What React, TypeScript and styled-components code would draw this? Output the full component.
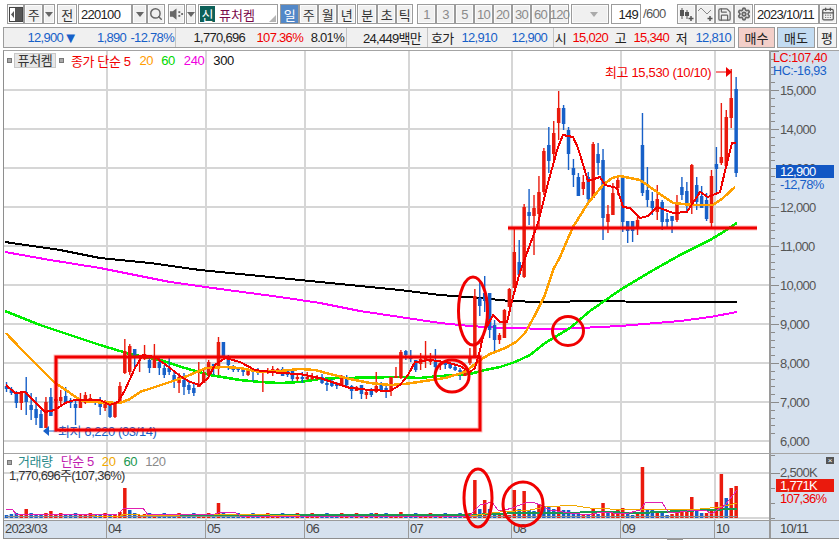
import React from "react";
import styled, { createGlobalStyle } from "styled-components";
import { Search, Save, Settings, CalendarDays } from "lucide-react";

const FONT = `"Liberation Sans", "Noto Sans CJK KR", sans-serif`;
const RED = "#ea1a0d";
const BLUE = "#1760c8";

const Global = createGlobalStyle`
  html, body { margin: 0; padding: 0; background: #fff; }
  body { font-family: ${FONT}; }
`;

const Page = styled.div`
  position: relative;
  width: 839px;
  height: 540px;
  overflow: hidden;
  background: #fff;
  font: 13px ${FONT};
  letter-spacing: -0.7px;
  color: #222;
`;

/* ---------- toolbar ---------- */
const Toolbar = styled.div`
  display: flex;
  height: 20px;
  padding: 4px 0 0 7px;
`;
const Btn = styled.div<{ $w: number; $gap?: number; $active?: boolean; $muted?: boolean }>`
  box-sizing: border-box;
  display: flex;
  align-items: center;
  justify-content: center;
  flex: none;
  width: ${(p) => p.$w}px;
  margin-left: ${(p) => p.$gap ?? 0}px;
  height: 20px;
  border: 1px solid #9c9c9c;
  background: ${(p) => (p.$active ? "#5288c8" : "#f0f0f0")};
  color: ${(p) => (p.$active ? "#fff" : p.$muted ? "#8a8a8a" : "#333")};
  box-shadow: inset 0 0 0 1px ${(p) => (p.$active ? "#5288c8" : "#fbfbfb")};
  white-space: nowrap;
`;
const ComboBtn = styled(Btn)`
  justify-content: flex-end;
  padding-right: 10px;
`;
const Field = styled.div<{ $w: number; $gap?: number; $align?: string }>`
  box-sizing: border-box;
  display: flex;
  align-items: center;
  justify-content: ${(p) => p.$align ?? "flex-start"};
  flex: none;
  width: ${(p) => p.$w}px;
  margin-left: ${(p) => p.$gap ?? 0}px;
  height: 20px;
  padding: 0 2px;
  border: 1px solid #9c9c9c;
  background: #fff;
  color: #222;
`;
const Caret = styled.i<{ $pale?: boolean }>`
  display: block;
  width: 0;
  height: 0;
  border-left: 4px solid transparent;
  border-right: 4px solid transparent;
  border-top: 5px solid ${(p) => (p.$pale ? "#aaa" : "#666")};
`;
const StockBox = styled.div`
  box-sizing: border-box;
  position: relative;
  display: flex;
  align-items: center;
  flex: none;
  width: 80px;
  height: 20px;
  margin-left: 2px;
  border: 1px solid #9c9c9c;
  background: #fff;
  padding-left: 1px;
  color: #7a0a4a;
  font-size: 13px;
  letter-spacing: 0;
`;
const Badge = styled.span`
  display: flex;
  align-items: center;
  justify-content: center;
  width: 15px;
  height: 16px;
  margin-right: 4px;
  background: #0c6058;
  color: #fff;
`;
const Corner = styled.i`
  position: absolute;
  right: 1px;
  bottom: 1px;
  width: 0;
  height: 0;
  border-left: 7px solid transparent;
  border-bottom: 7px solid #b5b5b5;
`;
const Total = styled.span`
  flex: none;
  width: 36px;
  padding-left: 2px;
  box-sizing: border-box;
  line-height: 20px;
  color: #555;
`;

/* ---------- quote row ---------- */
const QuoteRow = styled.div`
  display: flex;
  height: 21px;
  margin-top: 3px;
  padding-left: 3px;
`;
const QuoteStrip = styled.div`
  box-sizing: border-box;
  display: flex;
  align-items: center;
  flex: none;
  width: 732px;
  height: 21px;
  margin-right: 1px;
  border: 1px solid #9c9c9c;
  background: #f0f0f0;
`;
const Section = styled.div<{ $w: number }>`
  box-sizing: border-box;
  display: flex;
  align-items: center;
  flex: none;
  width: ${(p) => p.$w}px;
  height: 100%;
  border-right: 1px solid #c4c4c4;
`;
const Cell = styled.span<{ $w: number; $c?: string; $left?: boolean }>`
  flex: none;
  width: ${(p) => p.$w}px;
  box-sizing: border-box;
  padding-left: ${(p) => (p.$left ? 3 : 0)}px;
  text-align: ${(p) => (p.$left ? "left" : "right")};
  color: ${(p) => p.$c ?? "#222"};
  white-space: nowrap;
`;
const Arrow = styled(Cell)`
  font-size: 15px;
  line-height: 15px;
  letter-spacing: 0;
`;
const TradeBtn = styled.div<{ $w: number; $bg: string }>`
  box-sizing: border-box;
  display: flex;
  align-items: center;
  justify-content: center;
  flex: none;
  width: ${(p) => p.$w}px;
  margin-left: 2px;
  height: 21px;
  border: 1px solid #9c9c9c;
  background: ${(p) => p.$bg};
  letter-spacing: 0;
  color: #222;
`;

/* ---------- chart ---------- */
const ChartFrame = styled.div`
  position: relative;
  box-sizing: border-box;
  width: 839px;
  height: 490px;
  margin-top: 2px;
  padding-left: 3px;
`;
const FrameInner = styled.div`
  box-sizing: border-box;
  height: 489px;
  border-top: 1px solid #a4a4a4;
  border-left: 1px solid #8e8e8e;
  border-bottom: 1px solid #8e8e8e;
  display: grid;
  grid-template-columns: 767px 68px;
  grid-template-rows: 402px 67px 18px;
`;
const PlotBox = styled.div`
  position: relative;
  background: #fff;
  border-right: 2px solid #9a9a9a;
  height: 402px;
  box-sizing: border-box;
`;
const VolumeBox = styled(PlotBox)`
  height: 67px;
  border-top: 1px solid #a4a4a4;
`;
const ChartSvg = styled.svg`
  display: block;
  overflow: hidden;
`;
const AxisBox = styled.div`
  position: relative;
  background: #d6e1ee;
  overflow: hidden;
`;
const AxisVolume = styled(AxisBox)`
  border-top: 1px solid #a4a4a4;
  box-sizing: border-box;
`;
const HeaderReadout = styled.div`
  position: absolute;
  left: 2px;
  top: 1px;
  font-size: 12.5px;
  line-height: 13px;
  letter-spacing: -0.4px;
`;
const ReadLine = styled.div<{ $c: string }>`
  color: ${(p) => p.$c};
`;
const PriceFlag = styled.div<{ $bg: string; $top: number }>`
  position: absolute;
  left: 5px;
  top: ${(p) => p.$top}px;
  width: 58px;
  height: 13px;
  line-height: 13px;
  padding-left: 4px;
  box-sizing: border-box;
  background: ${(p) => p.$bg};
  color: #fff;
`;
const FlagNote = styled.div<{ $c: string; $top: number }>`
  position: absolute;
  left: 9px;
  top: ${(p) => p.$top}px;
  line-height: 11px;
  color: ${(p) => p.$c};
`;
const Legend = styled.div`
  position: absolute;
  left: 3px;
  top: 2px;
  display: flex;
  align-items: center;
  height: 15px;
  white-space: nowrap;
`;
const Dot = styled.i<{ $gap?: number }>`
  display: block;
  flex: none;
  width: 5px;
  height: 5px;
  margin-left: ${(p) => p.$gap ?? 0}px;
  background: #a8a8a8;
  border: 1px solid #777;
  box-sizing: border-box;
`;
const Tag = styled.span`
  flex: none;
  box-sizing: border-box;
  width: 42px;
  height: 15px;
  margin-left: 2px;
  line-height: 14px;
  text-align: center;
  background: #e6e6e6;
  border: 1px solid #c8c8c8;
  color: #333;
  letter-spacing: -0.3px;
`;
const LegendItem = styled.span<{ $c: string; $gap: number }>`
  margin-left: ${(p) => p.$gap}px;
  color: ${(p) => p.$c};
  letter-spacing: -0.4px;
`;
const VolLegend = styled(Legend)`
  top: 1px;
  height: 14px;
  line-height: 14px;
`;
const VolInfo = styled.div`
  position: absolute;
  left: 5px;
  top: 16px;
  line-height: 12px;
  letter-spacing: -0.75px;
  color: #333;
`;
const CloseBtn = styled.div`
  position: absolute;
  right: 5px;
  top: 3px;
  width: 8px;
  height: 7px;
  background: #555;
  color: #fff;
  font-size: 8px;
  line-height: 7px;
  text-align: center;
  letter-spacing: 0;
`;
const TimeAxis = styled.div`
  display: flex;
  background: #d6e1ee;
  border-top: 1px solid #9a9a9a;
  box-sizing: border-box;
  border-right: 2px solid #9a9a9a;
`;
const TimeCell = styled.div<{ $w: number }>`
  box-sizing: border-box;
  flex: none;
  width: ${(p) => p.$w}px;
  padding-left: 1px;
  line-height: 16px;
  color: #444;
  border-right: 1px solid #9a9a9a;
  &:last-child { border-right: 0; }
`;
const TimeEnd = styled.div`
  background: #d6e1ee;
  border-top: 1px solid #9a9a9a;
  box-sizing: border-box;
  padding-left: 9px;
  line-height: 16px;
  color: #444;
`;
const Overlay = styled.svg`
  position: absolute;
  left: 0;
  top: 0;
  pointer-events: none;
`;
const Thumb = styled.i`
  position: absolute;
  left: 667px;
  bottom: 0;
  width: 16px;
  height: 2px;
  background: #9a9a9a;
`;
const SvgText = styled.text<{ $ls?: number }>`
  font-family: ${FONT};
  font-size: 13px;
  letter-spacing: ${(p) => p.$ls ?? -0.7}px;
`;

/* ---------- data ---------- */
type C = [number, number, number, number, number];
// high, body top, body bottom, low, 1 = up (red) / 0 = down (blue); pixel rows of the picture
const candles: C[] = [
  [382,386,389,392,0],[387,389,393,395,0],[391,392,403,408,0],[391,392,403,410,1],[377,392,402,415,0],
  [393,405,410,420,0],[397,409,418,425,0],[410,414,428,428,0],[397,402,428,428,1],[388,397,416,416,0],
  [398,399,401,402,1],[390,397,401,405,1],[387,396,402,404,0],[398,400,403,408,0],[400,404,408,425,0],
  [393,400,408,408,1],[392,395,403,404,1],[394,398,401,403,1],[400,401,403,405,0],[397,402,407,415,0],
  [400,403,408,411,1],[404,405,417,418,0],[403,404,417,418,1],[382,386,403,404,1],[339,351,373,374,1],
  [344,346,372,375,1],[349,349,355,367,0],[355,355,358,372,1],[345,354,359,360,1],[357,360,368,373,0],
  [344,359,368,368,1],[358,362,368,375,0],[365,368,375,378,0],[358,368,372,375,0],[372,375,380,388,0],
  [373,377,383,393,1],[373,380,387,395,0],[380,385,390,394,0],[384,388,393,396,0],[362,385,386,387,1],
  [370,373,383,383,1],[360,362,375,378,1],[364,364,366,375,0],[337,342,367,375,1],[342,342,358,358,0],
  [355,359,365,370,0],[365,367,370,372,0],[367,368,370,372,0],[367,368,372,376,0],[368,371,375,376,1],
  [368,370,372,381,0],[368,370,372,375,0],[370,370,372,392,1],[368,370,372,374,1],[366,369,372,376,1],
  [368,369,371,372,1],[367,369,376,376,0],[371,371,375,377,0],[371,371,379,381,0],[375,377,378,381,1],
  [372,377,378,383,0],[372,377,378,380,1],[373,377,378,380,1],[375,377,379,380,1],[374,377,383,384,0],
  [378,383,385,391,0],[379,383,386,387,0],[382,384,386,389,0],[375,377,385,385,1],[375,377,385,388,0],
  [385,386,391,399,0],[386,387,391,391,1],[385,385,394,399,0],[391,392,395,399,1],[388,389,395,397,0],
  [372,386,392,393,1],[382,383,390,392,0],[385,388,392,398,0],[377,377,390,396,1],[367,376,378,378,1],
  [350,352,378,379,1],[350,351,355,360,0],[350,356,359,362,0],[360,360,370,372,0],[353,359,364,370,1],
  [341,358,360,368,1],[353,359,362,365,1],[349,360,367,373,0],[361,363,365,370,1],[362,363,365,369,0],
  [363,364,368,369,0],[366,367,370,371,0],[368,370,371,380,0],[369,370,376,376,1],[348,357,363,365,1],
  [289,296,358,358,1],[280,298,306,316,0],[276,293,301,312,0],[293,293,330,338,0],[320,325,340,351,0],
  [333,335,340,344,1],[309,310,338,338,1],[288,289,307,307,1],[228,252,288,288,1],[240,262,275,276,0],
  [204,207,277,278,1],[189,212,216,225,0],[195,208,216,255,1],[176,192,214,228,1],[148,151,192,195,1],
  [127,145,161,173,0],[121,133,154,162,1],[91,108,123,140,1],[105,108,124,130,0],[127,130,154,170,0],
  [159,168,175,187,0],[173,177,196,196,0],[175,182,189,195,1],[172,177,199,202,0],[142,144,198,198,1],
  [143,154,163,175,0],[149,160,218,240,0],[205,214,222,233,1],[183,193,215,215,1],[175,180,188,195,1],
  [177,177,222,232,0],[221,221,231,243,0],[221,221,231,242,0],[217,220,228,235,1],[113,145,193,196,0],
  [167,190,200,207,0],[192,201,208,215,0],[185,199,212,220,1],[200,202,222,230,0],[213,219,222,227,0],
  [216,216,221,233,0],[195,203,220,222,1],[177,187,195,200,0],[182,191,203,212,0],[164,165,203,214,1],
  [177,185,202,210,0],[186,196,208,208,0],[193,200,219,221,0],[170,176,223,228,1],[147,164,169,195,0],
  [103,157,163,165,1],[110,117,166,167,1],[69,98,118,128,1],[77,89,173,177,0],
];
const cx = (i: number) => 6.5 + 4.93 * i;

const volOverride: Record<number, [number, number]> = {
  4: [9, 1], 9: [7, 1], 23: [6, 1], 24: [30, 1], 25: [8, 0], 43: [15, 1], 69: [2, 1],
  75: [5, 1], 81: [3, 0], 80: [6, 1], 85: [3, 1], 90: [3, 0], 94: [5, 1], 95: [38, 1], 96: [9, 0],
  97: [18, 1], 98: [9, 0], 99: [3, 0], 100: [4, 1], 103: [28, 1], 104: [9, 0], 105: [27, 1], 106: [8, 0],
  107: [7, 0], 108: [14, 1], 109: [12, 0], 110: [11, 0], 111: [9, 0], 112: [11, 1], 113: [8, 0],
  114: [8, 0], 115: [5, 0], 116: [4, 0], 117: [4, 1], 118: [4, 0], 119: [9, 1], 120: [4, 0], 121: [15, 1],
  122: [6, 0], 123: [5, 1], 124: [8, 1], 125: [10, 1], 126: [6, 0], 127: [3, 0], 128: [4, 1], 129: [51, 1],
  130: [9, 0], 131: [9, 0], 132: [6, 1], 133: [6, 0], 134: [3, 0], 135: [4, 1], 136: [7, 1], 137: [8, 1],
  138: [8, 1], 139: [21, 1], 140: [8, 0], 141: [5, 0], 142: [5, 1], 143: [9, 1],
  144: [16, 1], 145: [44, 1], 146: [20, 0], 147: [30, 1], 148: [32, 1],
};
const pts = (a: number[][]) => a.map((p) => p.join(",")).join(" ");

const black = [[5,242],[60,250],[100,258],[150,263],[200,270],[250,275],[300,280],[350,285],[400,290],[440,295],[480,298],[510,301],[540,302],[600,301],[650,302],[700,302],[737,302]];
const magenta = [[5,252],[50,260],[100,268],[170,282],[220,289],[280,297],[320,303],[360,311],[400,317],[440,323],[470,326],[500,328],[560,329],[620,326],[680,321],[710,317],[737,312]];
const green = [[5,311],[40,325],[70,335],[100,345],[130,354],[160,360],[185,368],[210,375],[240,380],[260,382],[280,383],[300,382],[320,379],[340,378],[400,377],[420,378],[440,376],[470,374],[485,370],[500,367],[515,362],[530,355],[545,343],[570,328],[590,311],[620,290],[650,272],[680,255],[710,240],[725,231],[737,223]];
const orange = [[6,333],[20,348],[40,368],[55,383],[70,393],[80,400],[90,402],[120,403],[130,399],[140,392],[155,387],[170,382],[185,377],[206,368],[225,367],[240,368],[260,372],[280,371],[300,369],[315,370],[330,374],[350,379],[370,383],[390,385],[405,384],[425,381],[445,378],[465,372],[480,360],[490,354],[505,348],[516,342],[525,333],[535,315],[545,295],[553,270],[560,257],[573,227],[588,203],[603,185],[612,178],[620,176],[640,180],[657,192],[673,203],[693,205],[713,205],[723,198],[735,187]];
const ma5 = [[6,385],[15,393],[25,392],[35,402],[45,412],[55,410],[65,403],[75,400],[100,400],[110,405],[118,402],[125,390],[135,368],[143,355],[155,357],[170,368],[180,376],[190,382],[200,385],[208,378],[215,365],[225,358],[240,362],[255,370],[280,373],[300,374],[320,378],[335,383],[350,388],[370,390],[390,391],[400,385],[408,375],[415,362],[430,360],[445,362],[460,366],[470,372],[475,368],[480,350],[484,332],[493,315],[500,322],[507,322],[513,297],[520,272],[528,250],[538,223],[548,183],[558,147],[563,135],[573,137],[578,148],[588,181],[600,177],[605,185],[617,188],[623,207],[630,208],[640,218],[648,216],[657,207],[673,213],[687,212],[700,192],[708,197],[720,192],[727,163],[732,143],[736,143]];

const volMagenta = [[6,509],[12,509],[17,515],[50,514],[70,515],[118,514],[123,509],[127,508],[143,508],[148,515],[215,514],[222,512],[235,512],[240,516],[470,516],[473,512],[480,505],[492,502],[498,510],[505,510],[512,508],[520,505],[528,502],[535,503],[540,505],[550,510],[570,513],[590,515],[600,512],[625,514],[640,510],[645,503],[662,502],[668,512],[680,512],[695,510],[705,510],[712,514],[717,510],[725,505],[737,490]];
const volOrange = [[23,515],[45,514],[90,514],[95,516],[120,516],[125,514],[140,515],[180,515],[200,514],[240,514],[300,516],[470,516],[500,512],[530,510],[545,507],[560,506],[570,505],[590,508],[610,509],[640,510],[670,509],[700,509],[720,507],[737,503]];
const volGreen = [[150,515],[470,515],[520,513],[560,513],[600,512],[640,513],[680,511],[737,509]];
const volGray = [[6,516],[737,516]];

const vGrid = [107, 206, 305, 409, 512, 621, 715];
const hGrid = [90, 129, 168, 207, 246, 285, 324, 363, 402, 441];
const prices = ["15,000", "14,000", "13,000", "12,000", "11,000", "10,000", "9,000", "8,000", "7,000", "6,000"];

const SpeakerIcon = () => (
  <svg width="16" height="14" viewBox="0 0 16 14">
    <path d="M1 4h3l4-3v12l-4-3H1z" fill="#666" />
    <rect x="10" y="4" width="2" height="2" fill="#666" />
    <rect x="10" y="8" width="2" height="2" fill="#666" />
    <rect x="13" y="6" width="2" height="2" fill="#666" />
  </svg>
);
const PanelIcon = () => (
  <svg width="14" height="15" viewBox="0 0 14 15">
    <rect x="0.5" y="0.5" width="13" height="14" fill="#fff" stroke="#444" />
    <rect x="6" y="1" width="7" height="13" fill="#555" />
    <path d="M5 4 2 7.5 5 11z" fill="#555" />
  </svg>
);
const CandleAddIcon = () => (
  <svg width="16" height="15" viewBox="0 0 16 15">
    <path d="M3 1v11M8 3v9" stroke="#555" />
    <rect x="1" y="3" width="4" height="6" fill="#555" />
    <rect x="6" y="5" width="4" height="4" fill="#555" />
    <path d="M12 9v5M9.5 11.5h5" stroke="#555" strokeWidth="1.5" />
  </svg>
);
const LineAddIcon = () => (
  <svg width="16" height="15" viewBox="0 0 16 15">
    <path d="M0 4 3 1l3 3 3 3 4-4" stroke="#888" fill="none" />
    <path d="M12 9v5M9.5 11.5h5" stroke="#555" strokeWidth="1.5" />
  </svg>
);

const priceSvg = (
  <ChartSvg width="765" height="402" viewBox="4 51 765 402">
    <g shapeRendering="crispEdges">
      {hGrid.map((y) => <line key={y} x1="4" x2="771" y1={y} y2={y} stroke="#d6d6d6" strokeWidth="1.5" />)}
      {vGrid.map((x) => <line key={x} x1={x} x2={x} y1="51" y2="453" stroke="#d6d6d6" strokeWidth="1.5" />)}
      <polyline points={pts(black)} fill="none" stroke="#000" strokeWidth="2" />
      <polyline points={pts(magenta)} fill="none" stroke="#ff00ff" strokeWidth="2" />
      <polyline points={pts(green)} fill="none" stroke="#00ee00" strokeWidth="2.5" />
    </g>
    {candles.map((c, i) => {
      const col = c[4] ? RED : BLUE;
      const x = cx(i);
      return (
        <g key={i} fill={col}>
          <rect x={x - 0.7} y={c[0]} width="1.4" height={c[3] - c[0]} />
          <rect x={x - 1.75} y={c[1]} width="3.5" height={Math.max(2, c[2] - c[1])} />
        </g>
      );
    })}
    <g shapeRendering="crispEdges">
      <polyline points={pts(orange)} fill="none" stroke="#ffa000" strokeWidth="2.5" />
      <polyline points={pts(ma5)} fill="none" stroke="#f00000" strokeWidth="2" />
    </g>
    <SvgText x="605" y="77" fill="#f00000" $ls={-0.35}>최고 15,530 (10/10)</SvgText>
    <path d="M716 72h11" stroke="#f00000" />
    <path d="M726 67l6 5-6 5z" fill="#f00000" />
    <SvgText x="58" y="436" fill={BLUE} $ls={-0.4}>최저 6,220 (03/14)</SvgText>
    <path d="M47 431h10" stroke={BLUE} />
    <path d="M49 426l-6 5 6 5z" fill={BLUE} />
  </ChartSvg>
);

const volumeSvg = (
  <ChartSvg width="765" height="66" viewBox="4 454 765 66">
    <g shapeRendering="crispEdges">
      <line x1="4" x2="771" y1="473" y2="473" stroke="#d6d6d6" strokeWidth="1.5" />
      <line x1="4" x2="771" y1="518" y2="518" stroke="#d6d6d6" strokeWidth="1.5" />
      {vGrid.map((x) => <line key={x} x1={x} x2={x} y1="454" y2="520" stroke="#d6d6d6" strokeWidth="1.5" />)}
    </g>
    {candles.map((c, i) => {
      const o = volOverride[i];
      const h = o ? o[0] : 3 + ((i * 7) % 3);
      const up = o ? o[1] : c[4];
      return <rect key={i} x={cx(i) - 1.75} y={518 - h} width="3.5" height={h} fill={up ? RED : BLUE} />;
    })}
    <g shapeRendering="crispEdges">
      <polyline points={pts(volGray)} fill="none" stroke="#8c8c8c" />
      <polyline points={pts(volGreen)} fill="none" stroke="#1a9850" strokeWidth="2" />
      <polyline points={pts(volOrange)} fill="none" stroke="#f0a800" />
      <polyline points={pts(volMagenta)} fill="none" stroke="#e020b0" />
    </g>
  </ChartSvg>
);

const priceAxis = (
  <ChartSvg width="68" height="402" viewBox="771 51 68 402">
    <g shapeRendering="crispEdges" stroke="#8a8a8a">
      {Array.from({ length: 50 }, (_, i) => {
        const y = Math.round(90 + (i - 5) * 7.8);
        const major = i % 5 === 0;
        return <line key={i} x1="771" x2={major ? 779 : 775} y1={y} y2={y} />;
      })}
    </g>
    {prices.map((p, i) => (
      <SvgText key={p} x="780" y={hGrid[i] + 5} fill="#555">{p}</SvgText>
    ))}
  </ChartSvg>
);

const volumeAxis = (
  <ChartSvg width="68" height="66" viewBox="771 454 68 66">
    <g shapeRendering="crispEdges" stroke="#8a8a8a">
      {[455, 473, 488, 503, 518].map((y, i) => <line key={y} x1="771" x2={i === 1 ? 780 : 775} y1={y} y2={y} />)}
    </g>
    <SvgText x="780" y="477" fill="#555">2,500K</SvgText>
  </ChartSvg>
);

const times: [string, number][] = [["2023/03", 103], ["04", 99], ["05", 99], ["06", 104], ["07", 103], ["08", 109], ["09", 94], ["10", 56]];
const periods = ["1", "3", "5", "10", "20", "30", "60", "120"];

export default function App() {
  return (
    <Page>
      <Global />
      <Toolbar>
        <Btn $w={17}><PanelIcon /></Btn>
        <Btn $w={19}>주</Btn>
        <Btn $w={12}><Caret /></Btn>
        <Btn $w={20} $gap={2}>전</Btn>
        <Field $w={54} $gap={1}>220100</Field>
        <Btn $w={15}><Caret /></Btn>
        <Btn $w={18}><Search size={14} color="#666" strokeWidth={2.5} /></Btn>
        <Btn $w={17} $gap={3}><SpeakerIcon /></Btn>
        <Btn $w={10} $gap={1}><Caret /></Btn>
        <StockBox><Badge>신</Badge>퓨처켐<Corner /></StockBox>
        <Btn $w={19} $gap={2} $active>일</Btn>
        <Btn $w={19}>주</Btn>
        <Btn $w={19}>월</Btn>
        <Btn $w={19}>년</Btn>
        <Btn $w={20} $gap={1}>분</Btn>
        <Btn $w={19}>초</Btn>
        <Btn $w={17}>틱</Btn>
        {periods.map((p, i) => <Btn key={p} $w={19} $gap={i === 0 ? 4 : 0} $muted>{p}</Btn>)}
        <ComboBtn $w={38} $gap={2}><Caret $pale /></ComboBtn>
        <Field $w={30} $gap={2} $align="flex-end">149</Field>
        <Total>/600</Total>
        <Btn $w={19}><CandleAddIcon /></Btn>
        <Btn $w={19}><LineAddIcon /></Btn>
        <Btn $w={19}><Save size={15} color="#666" strokeWidth={2} /></Btn>
        <Btn $w={19}><Settings size={14} color="#666" strokeWidth={3} /></Btn>
        <Field $w={65} $gap={1}>2023/10/11</Field>
        <Btn $w={18}><CalendarDays size={14} color="#555" /></Btn>
      </Toolbar>

      <QuoteRow>
        <QuoteStrip>
          <Section $w={172}>
            <Cell $w={59} $c={BLUE}>12,900</Cell>
            <Arrow $w={15} $c={BLUE}>▼</Arrow>
            <Cell $w={48} $c={BLUE}>1,890</Cell>
            <Cell $w={48} $c={BLUE}>-12.78%</Cell>
          </Section>
          <Section $w={171}>
            <Cell $w={69}>1,770,696</Cell>
            <Cell $w={58} $c="#f00000">107.36%</Cell>
            <Cell $w={41}>8.01%</Cell>
          </Section>
          <Section $w={81}>
            <Cell $w={74}>24,449백만</Cell>
          </Section>
          <Section $w={126}>
            <Cell $w={27} $left>호가</Cell>
            <Cell $w={42} $c={BLUE}>12,910</Cell>
            <Cell $w={50} $c={BLUE}>12,900</Cell>
          </Section>
          <Cell $w={12}>시</Cell>
          <Cell $w={42} $c="#f00000">15,020</Cell>
          <Cell $w={18}>고</Cell>
          <Cell $w={43} $c="#f00000">15,340</Cell>
          <Cell $w={18}>저</Cell>
          <Cell $w={44} $c={BLUE}>12,810</Cell>
        </QuoteStrip>
        <TradeBtn $w={37} $bg="#f3cfc9">매수</TradeBtn>
        <TradeBtn $w={38} $bg="#c3dcf2">매도</TradeBtn>
        <TradeBtn $w={20} $bg="#f0f0f0">평</TradeBtn>
      </QuoteRow>

      <ChartFrame>
        <FrameInner>
          <PlotBox>
            {priceSvg}
            <Legend>
              <Dot />
              <Tag>퓨처켐</Tag>
              <Dot $gap={3} />
              <LegendItem $c="#f00000" $gap={7}>종가 단순 5</LegendItem>
              <LegendItem $c="#ff9c00" $gap={9}>20</LegendItem>
              <LegendItem $c="#00d800" $gap={8}>60</LegendItem>
              <LegendItem $c="#f000e0" $gap={9}>240</LegendItem>
              <LegendItem $c="#111" $gap={9}>300</LegendItem>
            </Legend>
          </PlotBox>
          <AxisBox>
            {priceAxis}
            <HeaderReadout>
              <ReadLine $c="#f00000">LC:107,40</ReadLine>
              <ReadLine $c={BLUE}>HC:-16,93</ReadLine>
            </HeaderReadout>
            <PriceFlag $bg="#1257c4" $top={114}>12,900</PriceFlag>
            <FlagNote $c={BLUE} $top={128}>-12,78%</FlagNote>
          </AxisBox>
          <VolumeBox>
            {volumeSvg}
            <VolLegend>
              <Dot />
              <LegendItem $c="#2a8a8a" $gap={6}>거래량</LegendItem>
              <LegendItem $c="#c020b0" $gap={8}>단순 5</LegendItem>
              <LegendItem $c="#f0a800" $gap={8}>20</LegendItem>
              <LegendItem $c="#1a9850" $gap={8}>60</LegendItem>
              <LegendItem $c="#8a8a8a" $gap={8}>120</LegendItem>
            </VolLegend>
            <VolInfo>1,770,696주(107,36%)</VolInfo>
          </VolumeBox>
          <AxisVolume>
            {volumeAxis}
            <CloseBtn>×</CloseBtn>
            <PriceFlag $bg={RED} $top={25}>1,771K</PriceFlag>
            <FlagNote $c="#f00000" $top={39}>107,36%</FlagNote>
          </AxisVolume>
          <TimeAxis>
            {times.map(([t, w]) => <TimeCell key={t} $w={w}>{t}</TimeCell>)}
          </TimeAxis>
          <TimeEnd>10/11</TimeEnd>
        </FrameInner>
        <Overlay width="839" height="490" viewBox="0 50 839 490">
          <g fill="none" stroke="#ff0000" strokeOpacity="0.25" strokeWidth="5">
            <rect x="56" y="357" width="424" height="73" />
            <path d="M508 228H757" />
          </g>
          <g fill="none" stroke="#f00000" strokeWidth="3">
            <rect x="56" y="357" width="424" height="73" />
            <path d="M508 228H757" />
            <ellipse cx="473" cy="311" rx="14.5" ry="34" />
            <ellipse cx="452" cy="376" rx="17" ry="16" />
            <ellipse cx="568" cy="331" rx="15.5" ry="14.5" />
            <ellipse cx="478" cy="498" rx="14" ry="29" />
            <ellipse cx="523" cy="504" rx="20" ry="22" />
          </g>
        </Overlay>
        <Thumb />
      </ChartFrame>
    </Page>
  );
}
